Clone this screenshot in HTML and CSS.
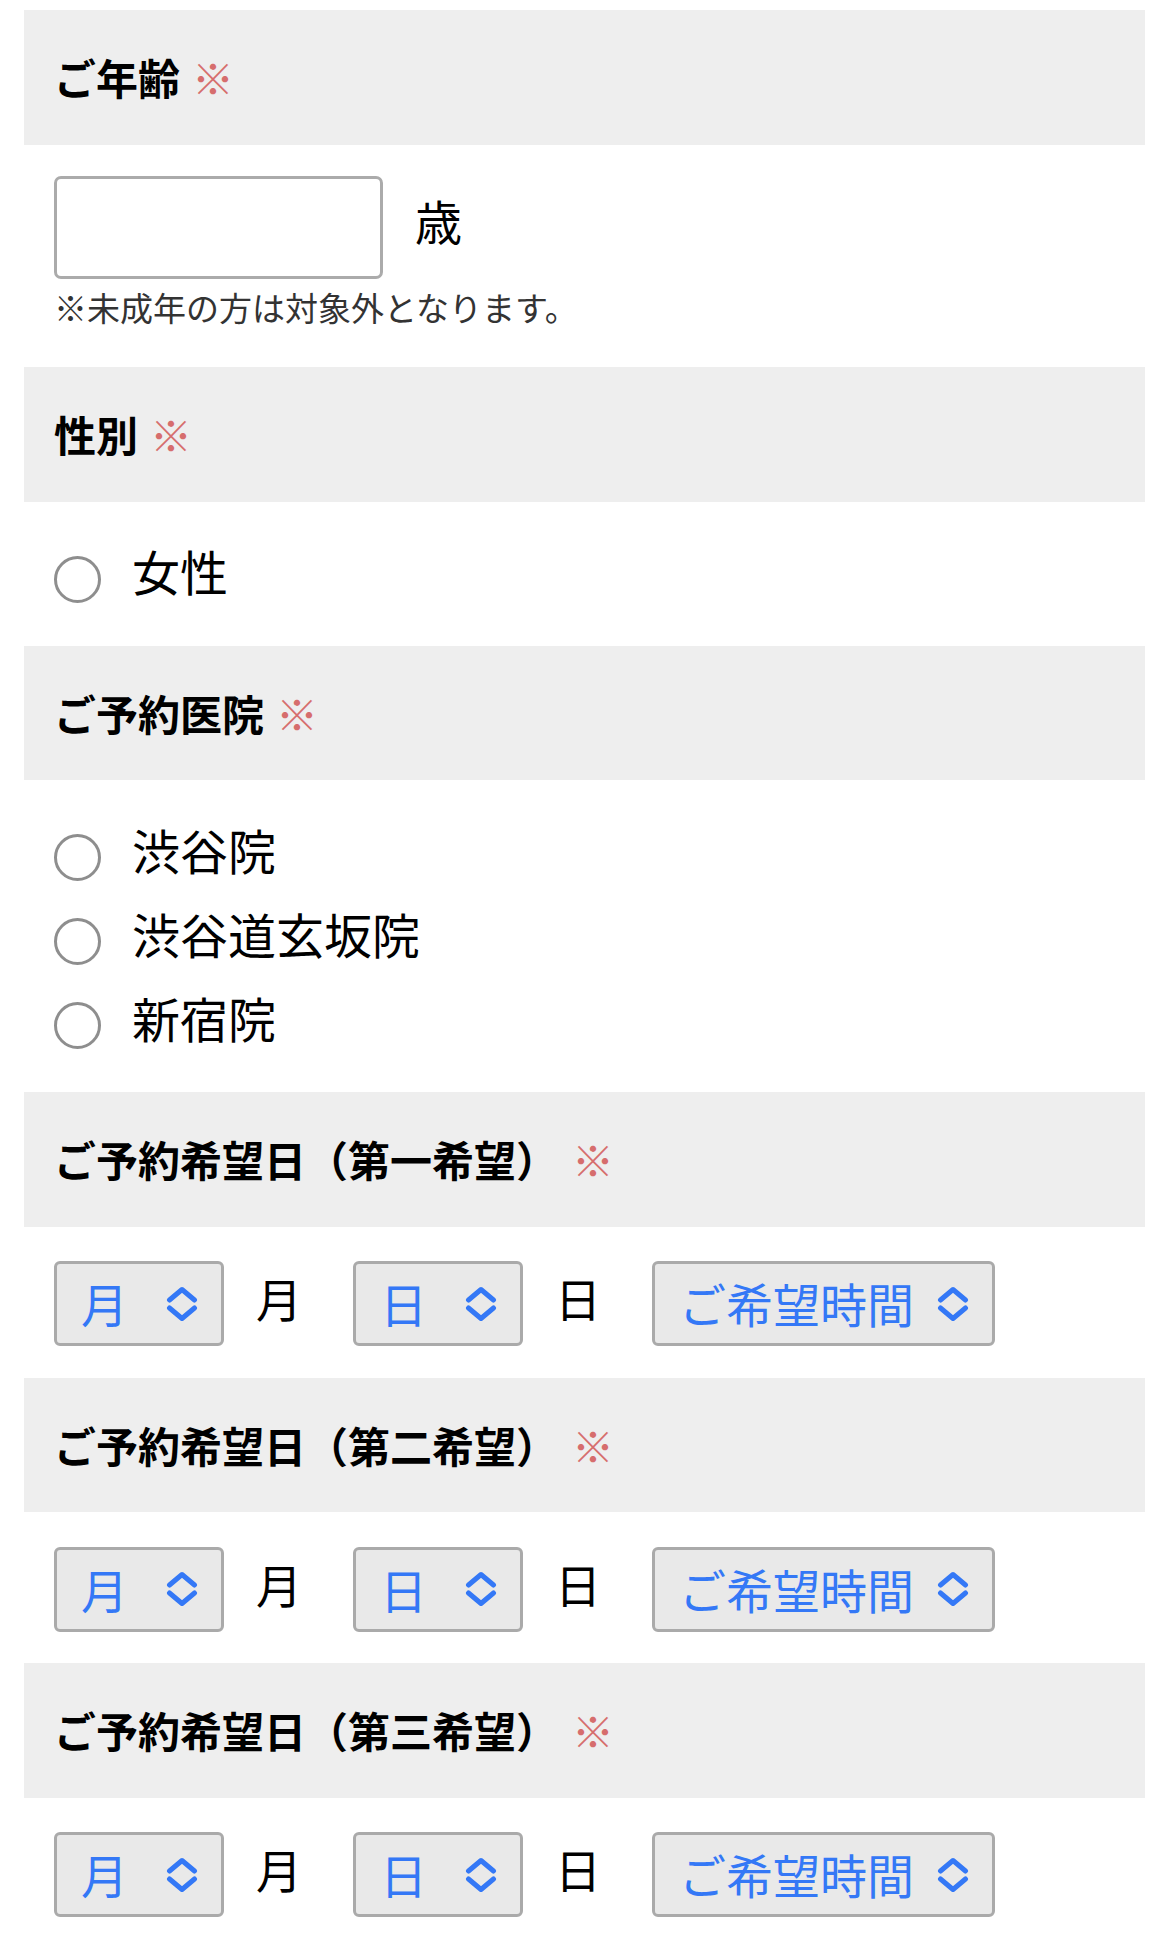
FILE: index.html
```html
<!DOCTYPE html>
<html lang="ja">
<head>
<meta charset="utf-8">
<title>予約フォーム</title>
<link rel="stylesheet" href="styles.css">
</head>
<body>
<form class="form">
  <section class="field">
    <h2 class="field-head">ご年齢<span class="req">※</span></h2>
    <div class="field-body age">
      <div class="age-row">
        <input type="text" class="age-input" aria-label="ご年齢">
        <span class="unit">歳</span>
      </div>
      <p class="note">※未成年の方は対象外となります。</p>
    </div>
  </section>

  <section class="field">
    <h2 class="field-head">性別<span class="req">※</span></h2>
    <div class="field-body radios">
      <label class="radio-row"><input type="radio" class="radio" name="sex"><span class="radio-text">女性</span></label>
    </div>
  </section>

  <section class="field">
    <h2 class="field-head">ご予約医院<span class="req">※</span></h2>
    <div class="field-body radios">
      <label class="radio-row"><input type="radio" class="radio" name="clinic"><span class="radio-text">渋谷院</span></label>
      <label class="radio-row"><input type="radio" class="radio" name="clinic"><span class="radio-text">渋谷道玄坂院</span></label>
      <label class="radio-row"><input type="radio" class="radio" name="clinic"><span class="radio-text">新宿院</span></label>
    </div>
  </section>

  <section class="field">
    <h2 class="field-head">ご予約希望日（第一希望）<span class="req req-wide">※</span></h2>
    <div class="field-body dates">
      <div class="select sel-sm"><span class="sel-text">月</span><svg class="chev" viewBox="0 0 32 36"><path d="M3.5 14 L16 3.5 L28.5 14 M3.5 22 L16 32.5 L28.5 22"/></svg></div>
      <span class="date-unit">月</span>
      <div class="select sel-sm"><span class="sel-text">日</span><svg class="chev" viewBox="0 0 32 36"><path d="M3.5 14 L16 3.5 L28.5 14 M3.5 22 L16 32.5 L28.5 22"/></svg></div>
      <span class="date-unit">日</span>
      <div class="select sel-lg"><span class="sel-text">ご希望時間</span><svg class="chev" viewBox="0 0 32 36"><path d="M3.5 14 L16 3.5 L28.5 14 M3.5 22 L16 32.5 L28.5 22"/></svg></div>
    </div>
  </section>

  <section class="field">
    <h2 class="field-head">ご予約希望日（第二希望）<span class="req req-wide">※</span></h2>
    <div class="field-body dates">
      <div class="select sel-sm"><span class="sel-text">月</span><svg class="chev" viewBox="0 0 32 36"><path d="M3.5 14 L16 3.5 L28.5 14 M3.5 22 L16 32.5 L28.5 22"/></svg></div>
      <span class="date-unit">月</span>
      <div class="select sel-sm"><span class="sel-text">日</span><svg class="chev" viewBox="0 0 32 36"><path d="M3.5 14 L16 3.5 L28.5 14 M3.5 22 L16 32.5 L28.5 22"/></svg></div>
      <span class="date-unit">日</span>
      <div class="select sel-lg"><span class="sel-text">ご希望時間</span><svg class="chev" viewBox="0 0 32 36"><path d="M3.5 14 L16 3.5 L28.5 14 M3.5 22 L16 32.5 L28.5 22"/></svg></div>
    </div>
  </section>

  <section class="field">
    <h2 class="field-head">ご予約希望日（第三希望）<span class="req req-wide">※</span></h2>
    <div class="field-body dates">
      <div class="select sel-sm"><span class="sel-text">月</span><svg class="chev" viewBox="0 0 32 36"><path d="M3.5 14 L16 3.5 L28.5 14 M3.5 22 L16 32.5 L28.5 22"/></svg></div>
      <span class="date-unit">月</span>
      <div class="select sel-sm"><span class="sel-text">日</span><svg class="chev" viewBox="0 0 32 36"><path d="M3.5 14 L16 3.5 L28.5 14 M3.5 22 L16 32.5 L28.5 22"/></svg></div>
      <span class="date-unit">日</span>
      <div class="select sel-lg"><span class="sel-text">ご希望時間</span><svg class="chev" viewBox="0 0 32 36"><path d="M3.5 14 L16 3.5 L28.5 14 M3.5 22 L16 32.5 L28.5 22"/></svg></div>
    </div>
  </section>
</form>
</body>
</html>
```

FILE: styles.css
```css
html, body {
  margin: 0;
  padding: 0;
  background: #ffffff;
}

body {
  font-family: "Noto Sans CJK JP", "Noto Sans", sans-serif;
  color: #000;
}

.form {
  padding: 10px 25px 0 24px;
}

.field-head {
  margin: 0;
  height: 134.5px;
  display: flex;
  align-items: center;
  padding-left: 30px;
  background: #eeeeee;
  font-size: 42px;
  font-weight: 700;
  line-height: 1;
  color: #000;
  box-sizing: border-box;
}

.req {
  color: #d66d6d;
  font-weight: 400;
  margin-left: 12px;
}

.req-wide {
  margin-left: 14px;
}

.field-body {
  padding-left: 30px;
}

/* age */
.field-body.age {
  padding-top: 31px;
  padding-bottom: 40.5px;
}

.age-row {
  display: flex;
  align-items: center;
}

.age-input {
  width: 329px;
  height: 103px;
  box-sizing: border-box;
  border: 3px solid #ababab;
  border-radius: 7px;
  margin: 0;
  padding: 0 12px;
  background: #fff;
  font-size: 46px;
  font-family: inherit;
}

.unit {
  font-size: 47px;
  line-height: 1.2;
  margin-left: 32px;
  margin-bottom: 13px;
}

.note {
  margin: 8px 0 0;
  font-size: 33px;
  line-height: 40px;
  color: #333;
}

/* radios */
.field-body.radios {
  padding-top: 35.5px;
  padding-bottom: 24.5px;
}

.radio-row {
  display: flex;
  align-items: center;
  height: 84px;
}

.radio {
  appearance: none;
  -webkit-appearance: none;
  width: 47px;
  height: 47px;
  margin: 0;
  box-sizing: border-box;
  border: 3.5px solid #8e8e8e;
  border-radius: 50%;
  background: #fff;
  flex: none;
}

.radio-text {
  font-size: 48px;
  line-height: 1.2;
  margin-left: 31px;
  margin-bottom: 16px;
}

/* dates */
.field-body.dates {
  display: flex;
  align-items: center;
  padding-top: 34.5px;
  padding-bottom: 31.5px;
}

.select {
  display: flex;
  align-items: center;
  height: 85px;
  box-sizing: border-box;
  border: 3px solid #aaaaaa;
  border-radius: 6px;
  background: #e9e9e9;
  padding: 0 23px 0 24px;
  color: #3478f6;
}

.sel-sm {
  width: 170px;
}

.sel-lg {
  width: 343px;
}

.sel-text {
  font-size: 47px;
  line-height: 1.2;
}

.chev {
  width: 32px;
  height: 36px;
  margin-left: auto;
  flex: none;
}

.chev path {
  fill: none;
  stroke: #3478f6;
  stroke-width: 5;
  stroke-linecap: round;
  stroke-linejoin: round;
}

.date-unit {
  font-size: 46px;
  line-height: 1.2;
  margin: 0 51px 11px 32px;
}
```
